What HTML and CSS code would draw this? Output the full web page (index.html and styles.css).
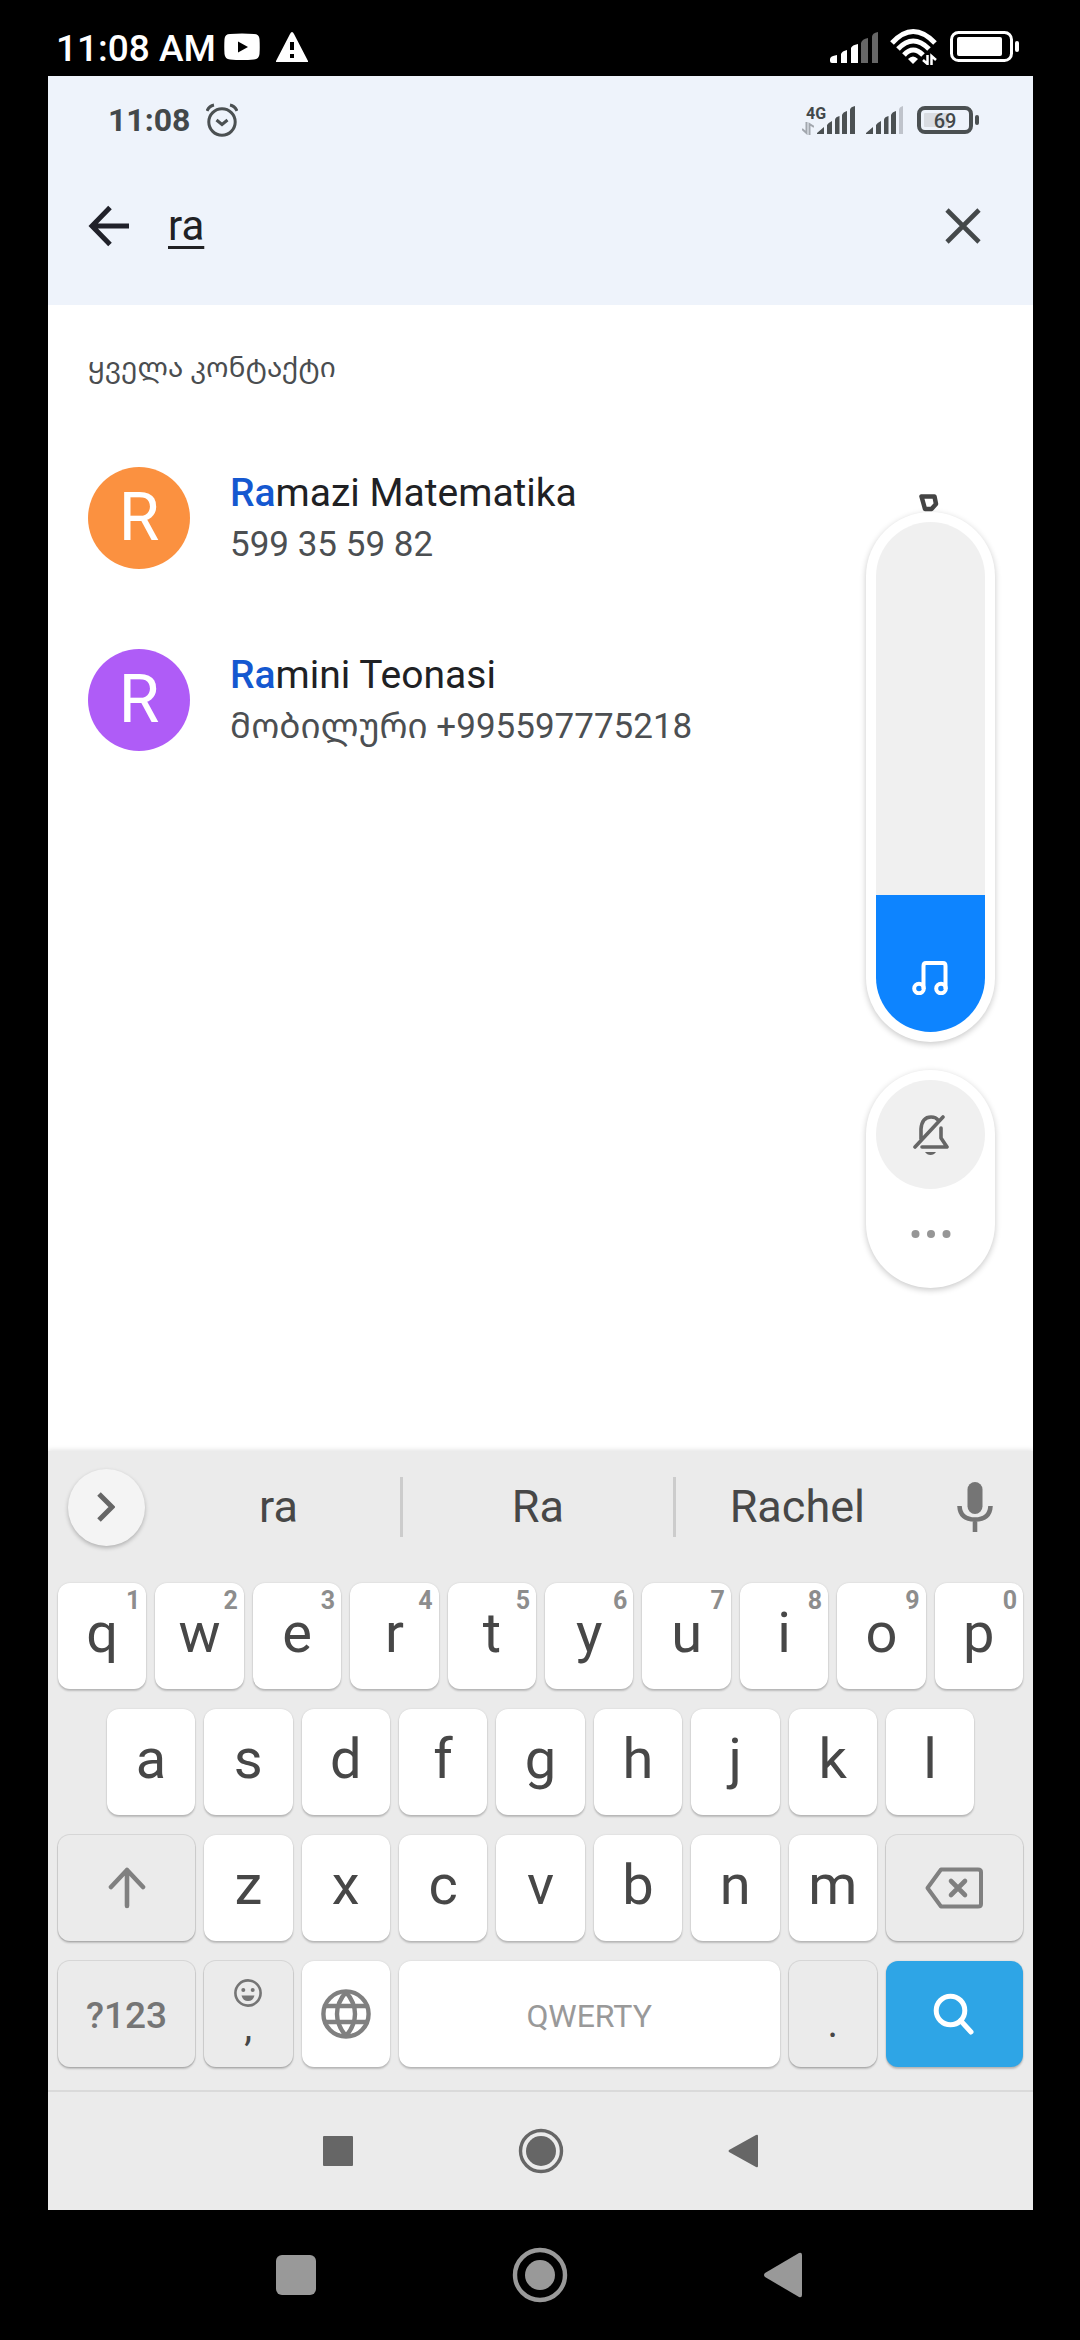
FILE: index.html
```html
<!DOCTYPE html>
<html lang="ka">
<head>
<meta charset="utf-8">
<meta name="viewport" content="width=device-width, initial-scale=1">
<title>ra</title>
<link rel="stylesheet" href="styles.css">
</head>
<body>
<header class="device-status">
  <span class="device-time">11:08 AM</span>
  <svg class="icon-youtube" width="36" height="28" viewBox="0 0 36 28"><path d="M6 1Q18 0 30 1Q35 1 35.500 6Q36 14 35.500 21Q35 26 30 26.500Q18 27.500 6 26.500Q1 26 .5 21Q0 14 .5 6Q1 1 6 1Z" fill="#fff"/><path d="M14 8.500V19.500L24 14Z" fill="#000"/></svg>
  <svg class="icon-warning" width="32" height="30" viewBox="0 0 32 30"><path d="M16 0Q17 0 18 2L32 29V30H0V29L14 2Q15 0 16 0Z" fill="#fff"/><path d="M14 10h4v8h-4zM14 22h4v4h-4z" fill="#000"/></svg>
  <span class="spacer"></span>
  <svg class="device-signal" width="48" height="32" viewBox="0 0 48 32"><g fill="#fff"><path d="M0 28Q0 25 7 24V32H2Q0 32 0 30ZM11 32V23Q12 20 17 19V32ZM21 32V17Q22 14 28 13V32Z"/><path d="M31 32V12Q32 8 38 7V32ZM42 32V6Q42 2 48 1V32Z" opacity=".4"/></g></svg>
  <svg class="device-wifi" width="48" height="36" viewBox="0 0 48 36"><g fill="none" stroke="#fff" stroke-width="5"><path d="M2 14Q23-9 45 14"/><path d="M8 20Q23 4 39 20"/><path d="M14 26Q23 16 33 26"/></g><path d="M18 30Q23 25 28 30L23 35Z" fill="#fff"/><path d="M37 26V36M42 36V26" stroke="#000" stroke-width="8"/><path d="M37.500 26V35L33 31M41.500 36V27L46 31" fill="none" stroke="#fff" stroke-width="2.500"/></svg>
  <svg width="70" height="32" viewBox="0 0 70 32"><rect x="1.500" y="1.500" width="60" height="28" rx="7" fill="none" stroke="#fff" stroke-width="3"/><rect x="7" y="6" width="45" height="19" rx="2" fill="#fff"/><rect x="65" y="10" width="4" height="11" rx="2" fill="#fff"/></svg>
</header>

<main class="screen">
  <section class="top">
    <div class="status">
      <span class="time">11:08</span>
      <svg width="32" height="34" viewBox="0 0 32 34" fill="none" stroke="#4b5052" stroke-width="3"><circle cx="16" cy="19" r="13.200"/><path d="M10.500 17L16 21.500L21.500 17M1 8Q3 3 8 2M31 8Q29 3 24 2"/></svg>
      <span class="spacer"></span>
      <span class="network">
        <span class="network-type">4G</span>
        <svg width="12" height="13" viewBox="0 0 12 13" fill="none" stroke="#a2a7ae" stroke-width="2"><path d="M4.500 0V11L0 7M7.500 13V2L12 5"/></svg>
      </span>
      <svg class="signal" width="38" height="28" viewBox="0 0 38 28" fill="#4b5052"><path d="M0 28V27L7 21V28ZM10 28V19Q11 17 15 15V28ZM18 28V14Q18 11 22.500 10V28ZM25 28V9Q26 6 30 5V28ZM33 28V4Q33 1 38 0V28Z"/></svg>
      <svg class="signal-second" width="38" height="28" viewBox="0 0 38 28" fill="#4b5052"><path d="M0 28V27L7 21V28ZM10 28V19Q11 17 15 15V28ZM18 28V14Q18 11 22.500 10V28ZM25 28V9Q26 6 30 5V28Z"/><path d="M33 28V4Q33 1 37 0V28Z" fill="#bfc3cb"/></svg>
      <span class="battery">69</span>
    </div>
    <form class="search" role="search">
      <button type="button" class="plain" aria-label="Back"><svg width="42" height="42" viewBox="0 0 42 42" fill="none" stroke="#20212a" stroke-width="5"><path d="M22 2.500L4 21L22 39.500M4 21H41"/></svg></button>
      <input class="query" type="text" value="ra" aria-label="Search">
      <button type="reset" class="plain" aria-label="Clear"><svg width="36" height="36" viewBox="0 0 36 36" stroke="#44484a" stroke-width="4.600"><path d="M2 2L34 34M34 2L2 34"/></svg></button>
    </form>
  </section>

  <section class="results">
    <h1 class="section-title">ყველა კონტაქტი</h1>
    <ul class="contacts">
      <li class="contact">
        <span class="avatar avatar-orange">R</span>
        <div><p class="name"><mark>Ra</mark>mazi Matematika</p><p class="phone">599 35 59 82</p></div>
      </li>
      <li class="contact">
        <span class="avatar avatar-purple">R</span>
        <div><p class="name"><mark>Ra</mark>mini Teonasi</p><p class="phone">მობილური +995597775218</p></div>
      </li>
    </ul>

    <aside class="volume">
      <svg class="volume-toggle" width="20" height="18" viewBox="0 0 20 18" fill="none" stroke="#444" stroke-width="4.500" stroke-linejoin="round"><path d="M2.500 2.500H15.500L17 10L12.500 15H6Z"/></svg>
      <div class="panel">
        <input class="level" type="range" min="0" max="100" value="27" aria-label="Volume">
        <svg class="note" width="36" height="34" viewBox="0 0 36 34" fill="none" stroke="#fff" stroke-width="4"><circle cx="7" cy="27.500" r="4.800"/><circle cx="29" cy="27.500" r="4.800"/><path d="M11.500 28V5Q11.500 2 14 2H31Q33.500 2 33.500 5V28"/></svg>
      </div>
      <div class="panel panel-actions">
        <button type="button" class="mute" aria-label="Mute"><svg width="36" height="42" viewBox="0 0 36 42" fill="none" stroke="#666" stroke-width="3.600" stroke-linecap="round" stroke-linejoin="round"><path d="M2 33L30 3M8 25V15Q9 3 18 3Q23 3 25 6M28 14V24L34 33H9"/><path d="M12 38H23Q21 41 17.500 41Q14 41 12 38Z" fill="#666" stroke="none"/></svg></button>
        <button type="button" class="plain" aria-label="More"><svg width="40" height="8" viewBox="0 0 40 8" fill="#969696"><circle cx="4.500" cy="4" r="4"/><circle cx="20" cy="4" r="4"/><circle cx="35.500" cy="4" r="4"/></svg></button>
      </div>
    </aside>
  </section>

  <section class="keyboard">
    <div class="suggestions">
      <button type="button" class="expand" aria-label="Expand"><svg width="18" height="30" viewBox="0 0 18 30" fill="none" stroke="#666" stroke-width="5"><path d="M2 2L15 15L2 28"/></svg></button>
      <button type="button" class="word">ra</button>
      <button type="button" class="word word-main">Ra</button>
      <button type="button" class="word">Rachel</button>
      <button type="button" class="mic" aria-label="Voice"><svg width="36" height="50" viewBox="0 0 36 50"><rect x="10.500" y="0" width="15" height="32" rx="7.500" fill="#757575"/><path d="M2.500 24C3 34 9 37.500 18 37.500S33 34 33.500 24M18 37V50" fill="none" stroke="#757575" stroke-width="4.600"/></svg></button>
    </div>
    <div class="keys">
      <button type="button" class="key">q<small>1</small></button>
      <button type="button" class="key">w<small>2</small></button>
      <button type="button" class="key">e<small>3</small></button>
      <button type="button" class="key">r<small>4</small></button>
      <button type="button" class="key">t<small>5</small></button>
      <button type="button" class="key">y<small>6</small></button>
      <button type="button" class="key">u<small>7</small></button>
      <button type="button" class="key">i<small>8</small></button>
      <button type="button" class="key">o<small>9</small></button>
      <button type="button" class="key">p<small>0</small></button>

      <button type="button" class="key key-indent">a</button>
      <button type="button" class="key">s</button>
      <button type="button" class="key">d</button>
      <button type="button" class="key">f</button>
      <button type="button" class="key">g</button>
      <button type="button" class="key">h</button>
      <button type="button" class="key">j</button>
      <button type="button" class="key">k</button>
      <button type="button" class="key">l</button>

      <button type="button" class="key key-wide key-gray" aria-label="Shift"><svg width="38" height="42" viewBox="0 0 38 42" fill="none" stroke="#808080" stroke-width="4.600" stroke-linecap="round" stroke-linejoin="round"><path d="M19 39V3M3 20L19 3L35 20"/></svg></button>
      <button type="button" class="key">z</button>
      <button type="button" class="key">x</button>
      <button type="button" class="key">c</button>
      <button type="button" class="key">v</button>
      <button type="button" class="key">b</button>
      <button type="button" class="key">n</button>
      <button type="button" class="key">m</button>
      <button type="button" class="key key-wide key-gray" aria-label="Backspace"><svg width="58" height="42" viewBox="0 0 58 42" fill="none" stroke="#808080" stroke-width="4" stroke-linejoin="round"><path d="M16 2.500H53Q56 2.500 56 5V37Q56 39.500 53 39.500H16L2.500 21Z"/><path d="M26 14L40 28M40 14L26 28" stroke-width="4.600" stroke-linecap="round"/></svg></button>

      <button type="button" class="key key-wide key-gray key-symbols">?123</button>
      <button type="button" class="key key-gray key-comma"><svg width="28" height="28" viewBox="0 0 28 28"><circle cx="14" cy="14" r="12.600" fill="none" stroke="#757575" stroke-width="2.600"/><circle cx="9.300" cy="11" r="2" fill="#757575"/><circle cx="18.700" cy="11" r="2" fill="#757575"/><path d="M7.500 16.500H20.500Q19 22 14 22T7.500 16.500Z" fill="#757575"/></svg><span>,</span></button>
      <button type="button" class="key" aria-label="Language"><svg width="50" height="50" viewBox="0 0 50 50" fill="none" stroke="#808080" stroke-width="4.400"><circle cx="25" cy="25" r="22.600"/><path d="M4 17H46M4 33H46M25 3C13 17 13 33 25 47M25 3C37 17 37 33 25 47"/></svg></button>
      <button type="button" class="key key-space">QWERTY</button>
      <button type="button" class="key key-gray key-period">.</button>
      <button type="button" class="key key-wide key-search" aria-label="Search"><svg width="42" height="42" viewBox="0 0 42 42" fill="none" stroke="#fff" stroke-width="5"><circle cx="17.500" cy="17.500" r="14.300"/><path d="M27.500 27.500L38 39" stroke-linecap="round"/></svg></button>
    </div>
    <nav class="nav">
      <button type="button" class="plain" aria-label="Recent"><svg width="48" height="48" viewBox="0 0 48 48"><rect x="9" y="9" width="30" height="30" rx="1" fill="#666"/></svg></button>
      <button type="button" class="plain" aria-label="Home"><svg width="48" height="48" viewBox="0 0 48 48"><circle cx="24" cy="24" r="20.500" fill="none" stroke="#666" stroke-width="3.400"/><circle cx="24" cy="24" r="15" fill="#666"/></svg></button>
      <button type="button" class="plain" aria-label="Back"><svg width="48" height="48" viewBox="0 0 48 48"><path d="M9 23L36 8Q38 7 38 9V39Q38 41 36 40L9 25Q8 24 9 23Z" fill="#666"/></svg></button>
    </nav>
  </section>
</main>

<nav class="nav nav-device">
  <button type="button" class="plain" aria-label="Recent"><svg width="56" height="56" viewBox="0 0 56 56"><rect x="8" y="8" width="40" height="40" rx="6" fill="#999"/></svg></button>
  <button type="button" class="plain" aria-label="Home"><svg width="56" height="56" viewBox="0 0 56 56"><circle cx="28" cy="28" r="25" fill="none" stroke="#999" stroke-width="4.400"/><circle cx="28" cy="28" r="15" fill="#999"/></svg></button>
  <button type="button" class="plain" aria-label="Back"><svg width="56" height="56" viewBox="0 0 56 56"><path d="M9 26L43 6Q46 5 46 8V48Q46 51 43 50L9 30Q7 28 9 26Z" fill="#999"/></svg></button>
</nav>
</body>
</html>
```

FILE: styles.css
```css
* { box-sizing: border-box; }

body {
  margin: 0;
  min-height: 100vh;
  display: flex;
  flex-direction: column;
  background: #000;
  font-family: Roboto, "Noto Sans Georgian", "DejaVu Sans", sans-serif;
}

h1, p, ul { margin: 0; padding: 0; font-weight: 400; }
svg { display: block; flex: none; }
button { font: inherit; border: 0; padding: 0; }
.plain { background: none; }
.spacer { flex: 1; }

/* Outer device bar */
.device-status {
  display: flex;
  align-items: center;
  height: 76px;
  padding: 18px 60px 0 56px;
  color: #fff;
}
.device-time { padding-top: 4px; font-size: 37px; line-height: 44px; font-weight: 500; }
.icon-youtube { margin-left: 8px; }
.icon-warning { margin-left: 16px; }
.device-wifi { margin: 0 12px; }

.screen {
  flex: 1;
  display: flex;
  flex-direction: column;
  margin: 0 47px 0 48px;
  background: #fff;
}

/* Search header */
.top { background: #eef3fb; }
.status {
  display: flex;
  align-items: center;
  height: 88px;
  padding: 0 54px 0 60px;
  color: #43484a;
}
.time { font-size: 32px; line-height: 40px; font-weight: 700; margin-right: 16px; }
.network { display: flex; flex-direction: column; width: 15px; }
.network-type { font-size: 16px; line-height: 16px; font-weight: 700; padding-left: 4px; }
.signal-second { margin: 0 13px 0 11px; }
.battery {
  position: relative;
  width: 56px;
  height: 28px;
  border: 4px solid #4b5052;
  border-radius: 8px;
  background: linear-gradient(to right, #d9dce2 60%, #eef3fb 60%) content-box;
  padding: 3px;
  margin-right: 6px;
  font-size: 20px;
  line-height: 16px;
  font-weight: 500;
  text-align: center;
}
.battery::after {
  content: "";
  position: absolute;
  right: -10px;
  top: 5px;
  width: 4px;
  height: 10px;
  border-radius: 2px;
  background: #4b5052;
}
.search {
  display: flex;
  align-items: center;
  height: 141px;
  padding: 0 52px 18px 40px;
}
.query {
  flex: 1;
  min-width: 0;
  margin: 0 20px 0 38px;
  padding: 0;
  border: 0;
  outline: 0;
  background: none;
  color: #202124;
  font: 400 42px/56px Roboto, sans-serif;
  text-decoration: underline 3px;
  text-underline-offset: 6px;
}

/* Contact results */
.results { position: relative; flex: 1; padding: 0 40px; }
.section-title {
  height: 122px;
  font-size: 28px;
  line-height: 126px;
  color: #4a4d50;
}
.contacts { list-style: none; }
.contact { display: flex; align-items: center; gap: 40px; height: 182px; }
.avatar {
  width: 102px;
  height: 102px;
  border-radius: 50%;
  color: #fff;
  font-size: 66px;
  line-height: 102px;
  text-align: center;
}
.avatar-orange { background: #fb9140; }
.avatar-purple { background: #af5cf7; }
.name { padding-top: 2px; font-size: 39px; line-height: 52px; color: #202124; }
.name mark { background: none; color: #1558d0; font-weight: 500; }
.phone { font-size: 35px; line-height: 52px; color: #4c4f52; }

/* Volume overlay */
.volume {
  position: absolute;
  top: 189px;
  right: 38px;
  width: 129px;
  display: flex;
  flex-direction: column;
}
.volume-toggle { margin-left: 53px; }
.panel {
  position: relative;
  padding: 10px;
  border-radius: 65px;
  background: #fff;
  box-shadow: 0 2px 6px rgba(0, 0, 0, .22);
}
.level {
  appearance: none;
  display: block;
  writing-mode: vertical-lr;
  direction: rtl;
  width: 109px;
  height: 510px;
  margin: 0;
  border-radius: 55px;
  background: linear-gradient(to top, #0d84ff 137px, #f0f0f0 137px);
}
.level::-webkit-slider-thumb { appearance: none; width: 109px; height: 1px; background: transparent; }
.note { position: absolute; left: 46px; bottom: 47px; pointer-events: none; }
.panel-actions {
  display: flex;
  flex-direction: column;
  align-items: center;
  gap: 41px;
  margin-top: 28px;
  padding: 10px 10px 50px;
}
.mute {
  display: grid;
  place-items: center;
  width: 109px;
  height: 109px;
  border-radius: 50%;
  background: #f0f0f0;
}

/* Keyboard */
.keyboard { background: #ebebeb; box-shadow: 0 -1px 5px rgba(0, 0, 0, .12); color: #474747; }
.suggestions { display: flex; align-items: center; height: 132px; padding: 0 40px 20px 20px; }
.expand {
  display: grid;
  place-items: center;
  width: 77px;
  height: 77px;
  margin-right: 12px;
  border-radius: 50%;
  background: #f4f4f4;
  box-shadow: 0 2px 4px rgba(0, 0, 0, .25);
}
.word { flex: 1 1 244px; height: 60px; font-size: 45px; line-height: 60px; background: none; color: inherit; }
.word-main { flex-basis: 276px; border: solid #ccc; border-width: 0 3px; }
.mic { margin-left: 38px; background: none; }
.keys {
  display: grid;
  grid-template-columns: repeat(20, minmax(0, 1fr));
  grid-auto-rows: 106px;
  row-gap: 20px;
  padding: 0 5px 23px 6px;
}
.key {
  position: relative;
  grid-column: span 2;
  display: flex;
  align-items: center;
  justify-content: center;
  margin: 0 5px 0 4px;
  padding-bottom: 6px;
  border-radius: 12px;
  background: #fff;
  box-shadow: 0 2px 2px rgba(0, 0, 0, .2), 0 0 2px rgba(0, 0, 0, .12);
  color: #474747;
  font-size: 56px;
  line-height: 64px;
}
.key small {
  position: absolute;
  top: 4px;
  right: 6px;
  font-size: 25px;
  line-height: 28px;
  font-weight: 700;
  color: #8d8d8d;
}
.key svg { margin-top: 6px; }
.key-indent { grid-column: 2 / span 2; }
.key-wide { grid-column: span 3; }
.key-gray { background: #ebebeb; box-shadow: 0 2px 2px rgba(0, 0, 0, .2), 0 0 0 1px #d6d6d6; }
.key-symbols { font-size: 37px; font-weight: 500; color: #757575; padding: 4px 0 0; }
.key-comma { flex-direction: column; justify-content: flex-start; padding-top: 12px; font-size: 40px; line-height: 40px; }
.key-space { grid-column: span 8; font-size: 32px; color: #999; padding: 4px 0 0; }
.key-period { font-size: 40px; padding: 20px 0 0; }
.key-search { background: #2ea5e6; }

/* Navigation rows */
.nav { display: flex; justify-content: center; align-items: center; gap: 155px; height: 120px; border-top: 2px solid #dadada; }
.nav-device { gap: 188px; height: 130px; border: 0; }
```
